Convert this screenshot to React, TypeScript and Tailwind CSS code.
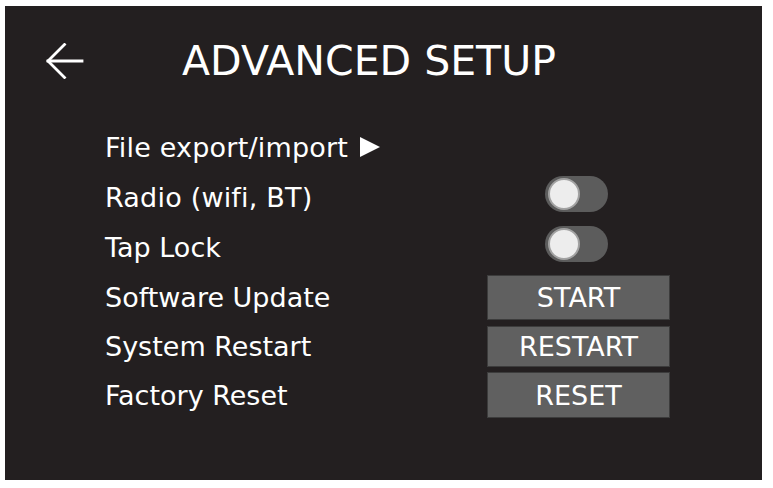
import React from 'react';

const font = { fontFamily: '"DejaVu Sans", Verdana, sans-serif' };

function Toggle() {
  return (
    <div className="mb-[6px] ml-[58px] flex h-[36px] w-[63px] items-center rounded-full bg-[#5c5c5c] pl-[3px]">
      <div className="h-[32px] w-[32px] rounded-full border-[2px] border-[#a2a2a2] bg-[#ededed]" />
    </div>
  );
}

function ActionButton({ label, height }: { label: string; height: string }) {
  return (
    <div
      className={`flex w-[183px] items-center justify-center border border-[#3c3c3c] bg-[#606060] text-[27px] leading-none text-white ${height}`}
    >
      {label}
    </div>
  );
}

export default function App() {
  return (
    <div className="h-[488px] w-[773px] bg-white pl-[5px] pt-[6px]" style={font}>
      <div className="h-[474px] w-[757px] bg-[#231f20] pt-[35px] text-white">
        {/* Header */}
        <div className="flex h-10 items-center pl-[41px]">
          <svg width="38" height="36" viewBox="0 0 38 36" fill="none" stroke="white" strokeWidth="2.8" strokeLinecap="square">
            <path d="M18.5 1.5 L2 18 L18.5 34.5" />
            <path d="M2 18 H36" />
          </svg>
          <h1 className="ml-[98px] text-[41px] leading-none font-normal tracking-normal">ADVANCED SETUP</h1>
        </div>

        {/* Settings rows */}
        <div className="mt-[41px] flex flex-col pl-[100px] text-[27px] leading-none">
          <div className="flex h-[50px] items-center">
            <span className="tracking-[0.2px]">File export/import</span>
            <svg className="ml-[12px]" width="20" height="20" viewBox="0 0 20 20">
              <polygon points="0,0 20,10 0,20" fill="white" />
            </svg>
          </div>
          <div className="flex h-[50px] items-center">
            <span className="w-[382px] tracking-[0.2px]">Radio (wifi, BT)</span>
            <div className="flex w-[183px]">
              <Toggle />
            </div>
          </div>
          <div className="flex h-[50px] items-center">
            <span className="w-[382px]">Tap Lock</span>
            <div className="flex w-[183px]">
              <Toggle />
            </div>
          </div>
          <div className="mt-[3px] flex items-center">
            <span className="w-[382px]">Software Update</span>
            <ActionButton label="START" height="h-[45px]" />
          </div>
          <div className="mt-[6px] flex items-center">
            <span className="w-[382px]">System Restart</span>
            <ActionButton label="RESTART" height="h-[41px]" />
          </div>
          <div className="mt-[5px] flex items-center">
            <span className="w-[382px]">Factory Reset</span>
            <ActionButton label="RESET" height="h-[46px]" />
          </div>
        </div>
      </div>
    </div>
  );
}
